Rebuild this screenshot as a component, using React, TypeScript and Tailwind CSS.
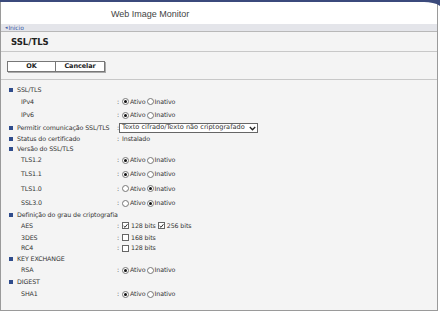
import React from "react";

const F = { fontFamily: '"DejaVu Sans", Verdana, sans-serif' } as const;

function Radio({ on }: { on: boolean }) {
  return (
    <span className="inline-flex items-center justify-center w-[7px] h-[7px] rounded-full border border-[#777] bg-white mr-[1px]">
      {on && <span className="w-[3px] h-[3px] rounded-full bg-[#111]" />}
    </span>
  );
}

function Check({ on }: { on: boolean }) {
  return (
    <span className="inline-flex items-center justify-center w-[7px] h-[7px] border border-[#666] bg-white mr-[2px]">
      {on && (
        <svg width="6" height="6" viewBox="0 0 6 6">
          <path d="M0.8 3 L2.4 4.6 L5.3 0.9" stroke="#111" strokeWidth="1.1" fill="none" />
        </svg>
      )}
    </span>
  );
}

function Radios({ on }: { on: boolean }) {
  return (
    <span className="inline-flex items-center">
      <Radio on={on} />
      <span className="mr-[1px]">Ativo</span>
      <Radio on={!on} />
      <span>Inativo</span>
    </span>
  );
}

function Header({ h, text }: { h: number; text: string }) {
  return (
    <div className="flex items-center pl-[8px]" style={{ height: h }}>
      <span className="w-[4px] h-[4px] bg-[#2f4c8c] mr-[4px]" />
      <span>{text}</span>
    </div>
  );
}

function Row({ h, label, children, top = false }: { h: number; label: string; children: React.ReactNode; top?: boolean }) {
  return (
    <div className="flex items-center" style={{ height: h }}>
      {top ? (
        <div className="flex items-center pl-[8px] w-[116px] whitespace-nowrap">
          <span className="w-[4px] h-[4px] bg-[#2f4c8c] mr-[4px]" />
          <span>{label}</span>
        </div>
      ) : (
        <div className="pl-[20px] w-[116px]">{label}</div>
      )}
      <span className="w-[5px]">:</span>
      <div className="flex items-center">{children}</div>
    </div>
  );
}

export default function App() {
  return (
    <div className="relative w-[440px] h-[312px] bg-white overflow-hidden text-[6.3px] tracking-[-0.1px] text-[#333]" style={F}>
      <div className="h-[2px] bg-[#3b4a7c]" />
      <svg className="absolute right-0 top-0" width="16" height="6" viewBox="0 0 16 6">
        <path d="M0 0 H16 V6 C12 3 6 2 0 2 Z" fill="#3b4a7c" />
      </svg>
      <div className="w-[438px] h-[309px] border-l border-r border-b border-[#9a9a9a] flex flex-col">
        <div className="h-[22px] flex items-center pl-[110px] pt-[3px] text-[9px] tracking-normal text-[#444]" style={{ fontFamily: '"Liberation Sans", Arial, sans-serif' }}>
          Web Image Monitor
        </div>
        <div className="h-[8px] bg-[#e4e5ea] border-b border-[#b8b8b8] flex items-center pl-[4px] text-[6px] text-[#4060a8]">
          <span className="mr-[1px] text-[5px]">◂</span>Inicio
        </div>
        <div className="flex-1 bg-[#f4f4f4] flex flex-col">
          <div className="h-[20px] border-b border-[#c8c8c8] flex items-center pl-[10px] pt-[1px] text-[8.5px] tracking-normal font-bold text-[#222]">
            SSL/TLS
          </div>
          <div className="h-[28px] border-b border-[#c8c8c8] flex items-center pl-[6px] pt-[2px]">
            <div className="flex">
              <div className="w-[49px] h-[11px] bg-white border border-[#777] shadow-[1px_1px_0_#aaa] flex items-center justify-center font-bold text-[6.5px] text-[#222]">OK</div>
              <div className="w-[49px] h-[11px] bg-white border border-[#777] border-l-0 shadow-[1px_1px_0_#aaa] flex items-center justify-center font-bold text-[6.5px] text-[#222]">Cancelar</div>
            </div>
          </div>
          <div className="pt-[4px] flex flex-col">
            <Header h={11} text="SSL/TLS" />
            <Row h={13} label="IPv4"><Radios on /></Row>
            <Row h={14} label="IPv6"><Radios on /></Row>
            <Row h={12} label="Permitir comunicação SSL/TLS" top>
              <div className="w-[139px] h-[10px] bg-white border border-[#666] flex items-center justify-between pl-[2px] pr-[1px] -ml-[3px] text-[6.6px] tracking-normal">
                <span>Texto cifrado/Texto não criptografado</span>
                <svg width="7" height="5" viewBox="0 0 7 5">
                  <path d="M0.8 1 L3.5 3.8 L6.2 1" stroke="#222" strokeWidth="1.3" fill="none" />
                </svg>
              </div>
            </Row>
            <Row h={10} label="Status do certificado" top>
              <span>Instalado</span>
            </Row>
            <Header h={9} text="Versão do SSL/TLS" />
            <Row h={14} label="TLS1.2"><Radios on /></Row>
            <Row h={14} label="TLS1.1"><Radios on /></Row>
            <Row h={15} label="TLS1.0"><Radios on={false} /></Row>
            <Row h={14} label="SSL3.0"><Radios on={false} /></Row>
            <Header h={9} text="Definição do grau de criptografia" />
            <Row h={13} label="AES">
              <Check on />
              <span className="mr-[2px]">128 bits</span>
              <Check on />
              <span>256 bits</span>
            </Row>
            <Row h={11} label="3DES">
              <Check on={false} />
              <span>168 bits</span>
            </Row>
            <Row h={10} label="RC4">
              <Check on={false} />
              <span>128 bits</span>
            </Row>
            <Header h={11} text="KEY EXCHANGE" />
            <Row h={12} label="RSA"><Radios on /></Row>
            <Header h={12} text="DIGEST" />
            <Row h={12} label="SHA1"><Radios on /></Row>
          </div>
        </div>
      </div>
    </div>
  );
}
